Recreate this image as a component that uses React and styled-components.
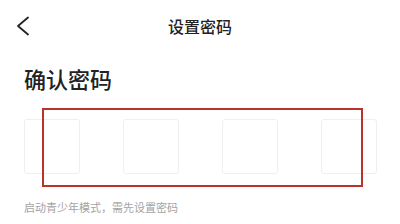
import styled, { createGlobalStyle } from "styled-components"

const Global = createGlobalStyle`
  html, body {
    margin: 0;
    padding: 0;
    background: #fff;
  }
  body {
    font-family: "Noto Sans CJK SC", "Noto Sans", sans-serif;
  }
`

const Page = styled.div`
  position: relative;
  width: 400px;
  height: 224px;
  overflow: hidden;
  background: #fff;
`

const NavBar = styled.div`
  display: grid;
  grid-template-columns: 50px 1fr 50px;
  align-items: center;
  height: 52px;
`

const BackButton = styled.button`
  display: flex;
  align-items: center;
  justify-content: flex-start;
  width: 50px;
  height: 52px;
  padding: 0 0 0 16px;
  border: none;
  background: none;
`

const NavTitle = styled.h1`
  margin: 0;
  text-align: center;
  font-size: 16px;
  font-weight: 500;
  color: #222;
  line-height: 50px;
`

const Content = styled.div`
  padding: 11px 24px 0 24px;
`

const Heading = styled.h2`
  margin: 0;
  font-size: 22px;
  font-weight: 500;
  color: #222;
  line-height: 30px;
`

const CodeRow = styled.div`
  display: flex;
  justify-content: space-between;
  margin-top: 26px;
  width: 353px;
`

const CodeBox = styled.div`
  width: 54px;
  height: 53px;
  border: 1px solid #efefef;
  border-radius: 3px;
`

const Hint = styled.p`
  margin: 26px 0 0 0;
  font-size: 11px;
  color: #a3a3a3;
  line-height: 14px;
`

const Highlight = styled.div`
  position: absolute;
  left: 42px;
  top: 108px;
  width: 321px;
  height: 79px;
  box-sizing: border-box;
  border: 2px solid #b9332b;
  pointer-events: none;
`

const App = () => {
  return (
    <Page>
      <Global />
      <NavBar>
        <BackButton>
          <svg width="14" height="20" viewBox="0 0 14 20">
            <path d="M12 1.5 L2 10 L12 18.5" fill="none" stroke="#222" strokeWidth="1.8" strokeLinecap="round" strokeLinejoin="round" />
          </svg>
        </BackButton>
        <NavTitle>设置密码</NavTitle>
        <div />
      </NavBar>
      <Content>
        <Heading>确认密码</Heading>
        <CodeRow>
          <CodeBox />
          <CodeBox />
          <CodeBox />
          <CodeBox />
        </CodeRow>
        <Hint>启动青少年模式，需先设置密码</Hint>
      </Content>
      <Highlight />
    </Page>
  )
}

export default App
